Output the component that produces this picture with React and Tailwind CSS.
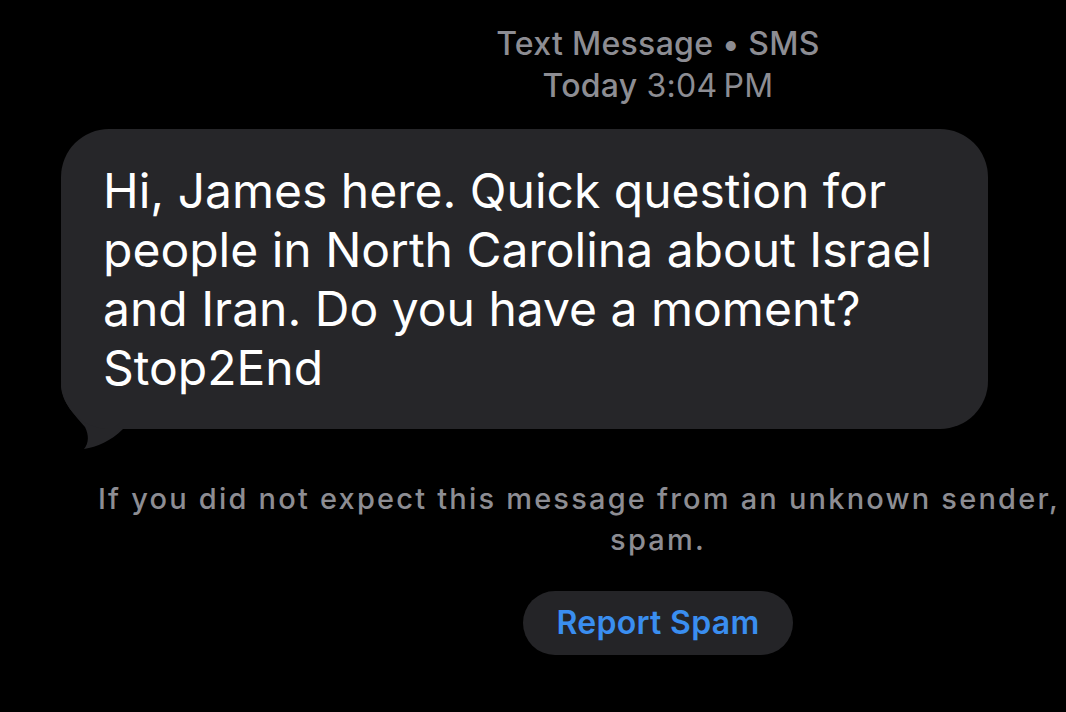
export default function App() {
  const font = { fontFamily: 'Inter, "Noto Sans", sans-serif' }
  return (
    <div className="w-[1066px] h-[712px] bg-black overflow-hidden" style={font}>
      <div className="w-[1316px] flex flex-col">
        <div className="pt-[23px] flex flex-col items-center text-[#8d8d93] text-[32px] leading-[42px] font-medium tracking-[0.3px]">
          <div>Text Message • SMS</div>
          <div>
            Today <span className="font-normal">3:04{'\u2009'}PM</span>
          </div>
        </div>

        <div className="relative ml-[61px] mt-[22px] w-[927px]">
          <svg className="absolute left-0 bottom-[-20px]" width="80" height="80" viewBox="0 0 80 80">
            <path
              d="M0 0 L0 17 C1 34 14 46 24 58 C28 66 28 74 23 80 C36 78 50 72 62 60 L80 60 L80 0 Z"
              fill="#262629"
            />
          </svg>
          <div className="relative bg-[#262629] rounded-[48px] pl-[42px] pr-[30px] pt-[32px] pb-[32px] text-white text-[48px] leading-[59px]">
            Hi, James here. Quick question for
            <br />
            people in North Carolina about Israel
            <br />
            and Iran. Do you have a moment?
            <br />
            Stop2End
          </div>
        </div>

        <div className="mt-[49px] text-[#8d8d93] text-[29px] leading-[41px] font-medium tracking-[2.2px]">
          <div className="pl-[98px] whitespace-nowrap">If you did not expect this message from an unknown sender,</div>
          <div className="text-center">spam.</div>
        </div>

        <div className="flex justify-center mt-[31px]">
          <button className="h-[64px] px-[33px] rounded-full bg-[#242427] text-[#3a8ef0] text-[32px] font-semibold tracking-[0.3px]">
            Report Spam
          </button>
        </div>
      </div>
    </div>
  )
}
